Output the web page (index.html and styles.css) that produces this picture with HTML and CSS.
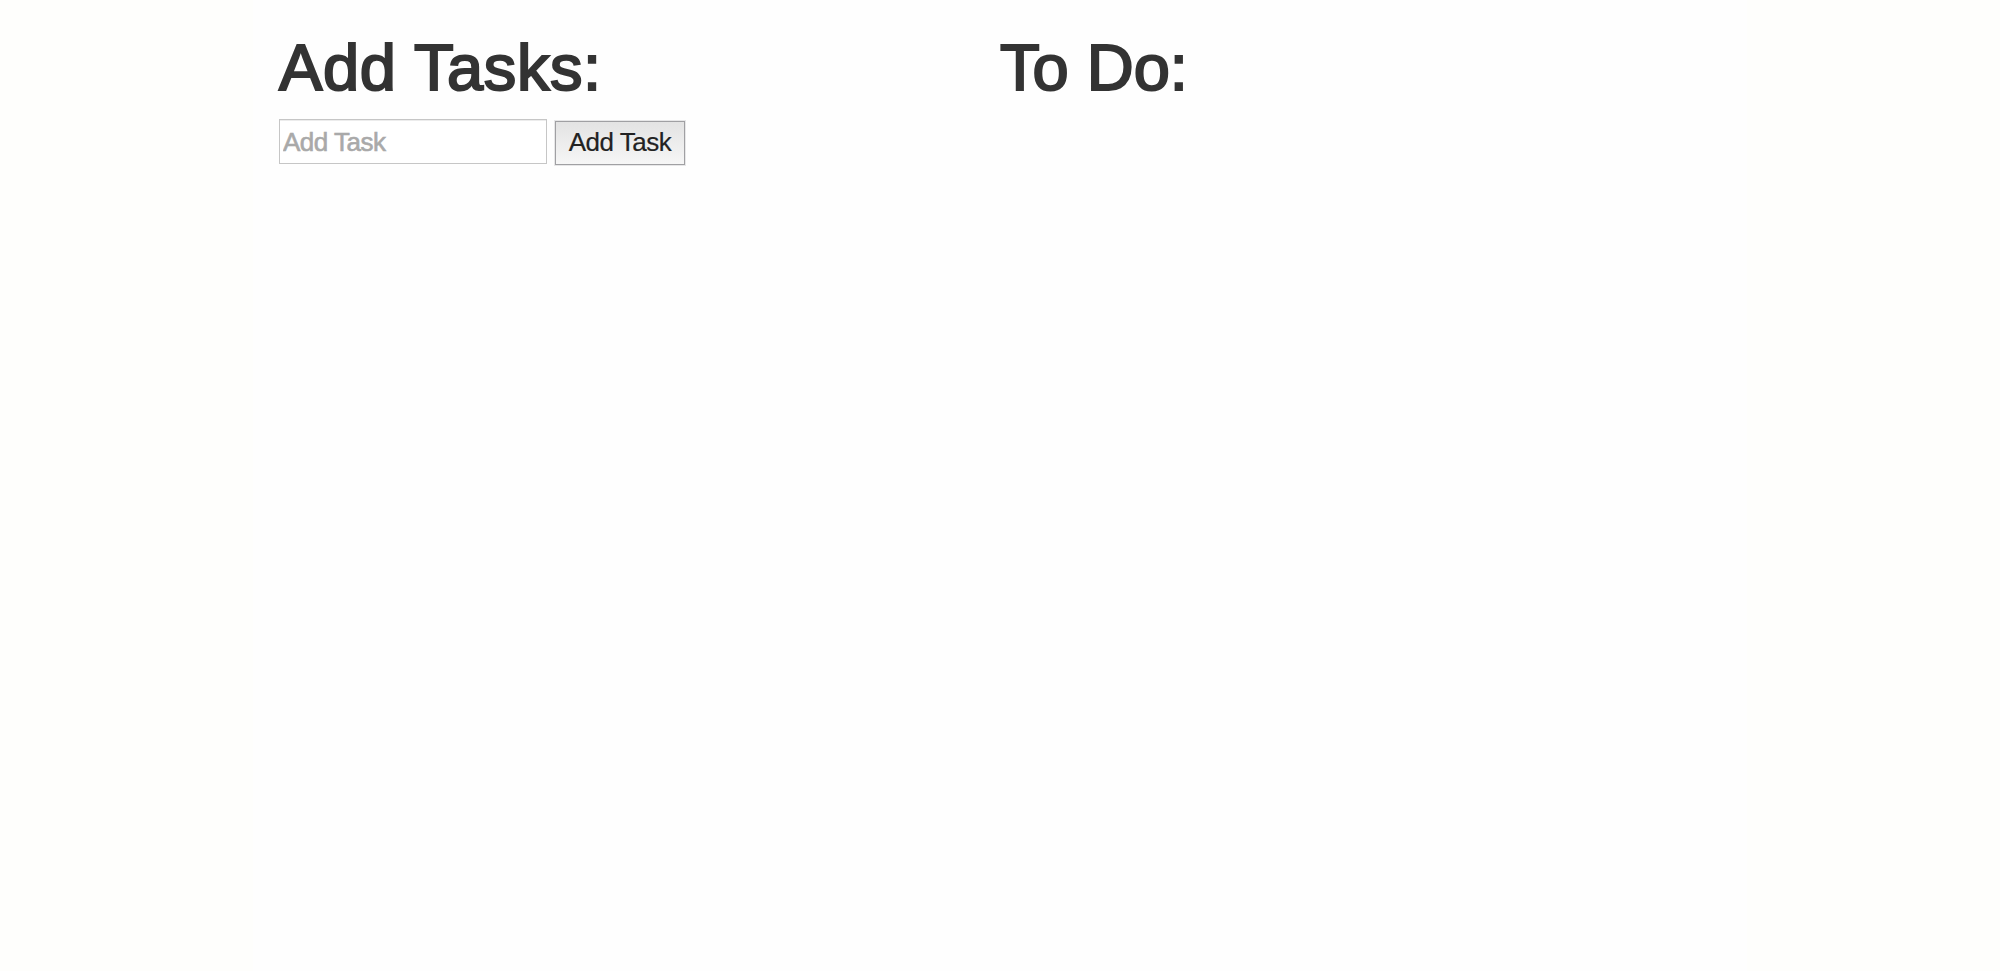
FILE: index.html
```html
<!DOCTYPE html>
<html lang="en">
<head>
<meta charset="utf-8">
<title>Tasks</title>
<link rel="stylesheet" href="styles.css">
</head>
<body>
<main class="container">
  <section class="column">
    <h1 class="title title-add">Add Tasks:</h1>
    <form class="task-form">
      <input class="task-input" type="text" placeholder="Add Task">
      <button class="task-button" type="button">Add Task</button>
    </form>
  </section>
  <section class="column">
    <h1 class="title title-todo">To Do:</h1>
  </section>
</main>
</body>
</html>
```

FILE: styles.css
```css
* { box-sizing: border-box; }
body {
  margin: 0;
  background: #fefefc;
  color: #333;
  font-family: "Liberation Sans", Arial, sans-serif;
}
.container {
  display: flex;
  width: 1494px;
  min-height: 971px;
  margin: 0 auto;
  padding: 28px 26px 0;
  background: #fefefe;
}
.column { width: 721px; }
.title {
  margin: 0;
  height: 91px;
  font-size: 65px;
  line-height: 80px;
  font-weight: 400;
  -webkit-text-stroke: 2.1px #333;
  white-space: nowrap;
}
.title-add { letter-spacing: 0.6px; }
.title-todo { letter-spacing: 0; }
.task-form { display: flex; gap: 8px; }
.task-input {
  width: 268px;
  height: 45px;
  padding: 2px 3px 0;
  border: 1px solid #c6c6c6;
  background: #fff;
  box-shadow: inset 0 1px #ececec;
  font: 26px "Liberation Sans", Arial, sans-serif;
  letter-spacing: -0.5px;
}
.task-input::placeholder { color: #a9a9a9; opacity: 1; -webkit-text-stroke: 0.6px #a9a9a9; }
.task-button {
  width: 130px;
  height: 44px;
  margin-top: 2px;
  padding: 0 0 2px;
  border: 1px solid #a0a0a3;
  background: linear-gradient(#e3e3e3, #f6f6f6);
  box-shadow: 0 0 0 1px #cfcfd180;
  color: #222;
  font: 26px "Liberation Sans", Arial, sans-serif;
  letter-spacing: -0.5px;
  -webkit-text-stroke: 0.2px #222;
}
```
